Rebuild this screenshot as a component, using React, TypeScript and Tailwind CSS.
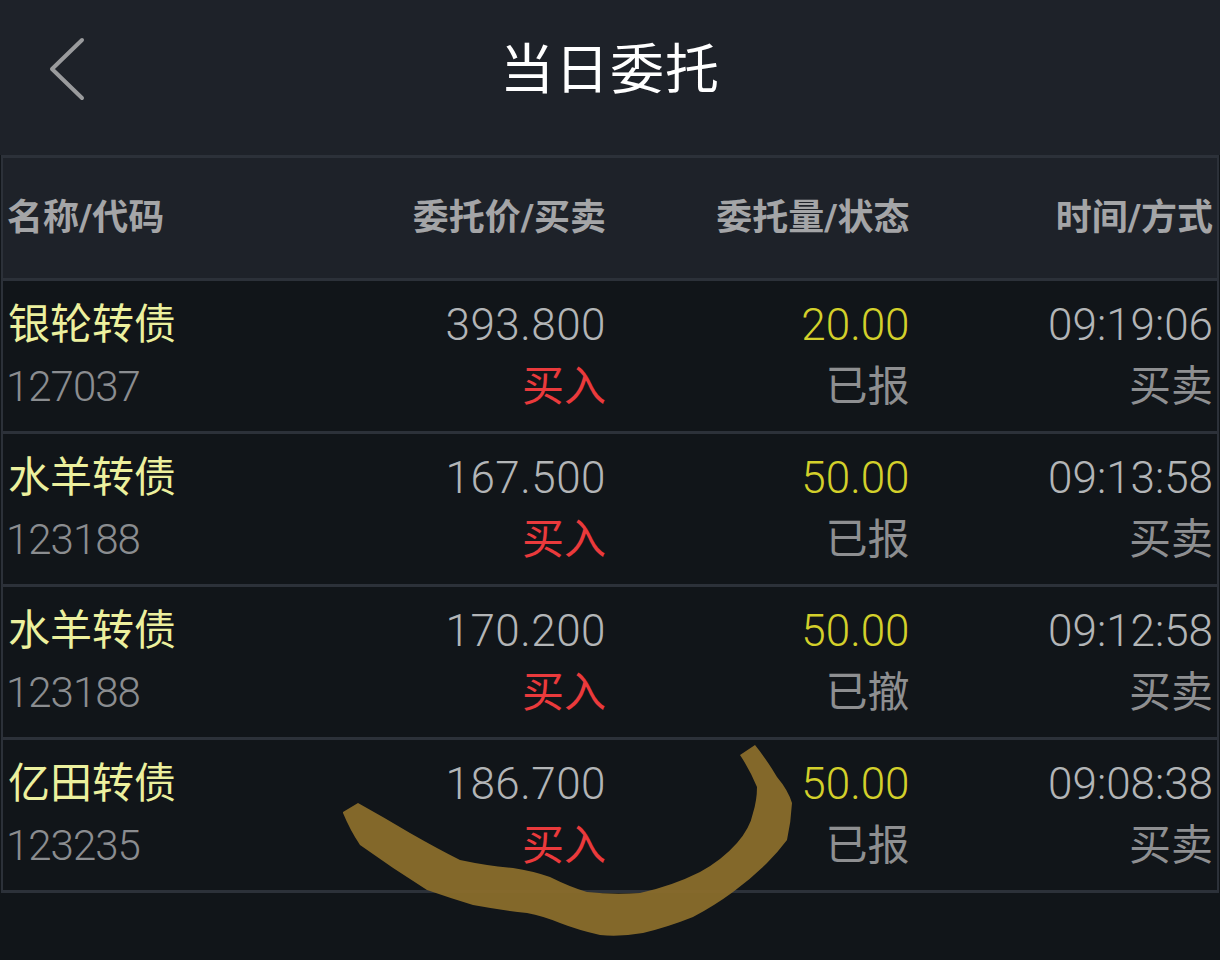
import React from "react";

type Order = {
  name: string;
  code: string;
  price: string;
  side: string;
  qty: string;
  status: string;
  time: string;
  mode: string;
};

const orders: Order[] = [
  { name: "银轮转债", code: "127037", price: "393.800", side: "买入", qty: "20.00", status: "已报", time: "09:19:06", mode: "买卖" },
  { name: "水羊转债", code: "123188", price: "167.500", side: "买入", qty: "50.00", status: "已报", time: "09:13:58", mode: "买卖" },
  { name: "水羊转债", code: "123188", price: "170.200", side: "买入", qty: "50.00", status: "已撤", time: "09:12:58", mode: "买卖" },
  { name: "亿田转债", code: "123235", price: "186.700", side: "买入", qty: "50.00", status: "已报", time: "09:08:38", mode: "买卖" },
];

const font = { fontFamily: "Roboto, 'Noto Sans CJK SC', sans-serif" };

export default function App() {
  return (
    <div className="relative h-[960px] w-[1220px] overflow-hidden bg-[#111519]" style={font}>
      {/* 顶部导航 */}
      <header className="relative flex h-[155px] items-center justify-center bg-[#1e2229]">
        <button className="absolute left-[44px] top-[36px] flex h-[66px] w-[44px] items-center justify-center">
          <svg width="40" height="66" viewBox="0 0 40 66" fill="none">
            <path d="M36 4 L6 33 L36 62" stroke="#9a9b9d" strokeWidth="4" strokeLinecap="round" strokeLinejoin="round" />
          </svg>
        </button>
        <h1 className="mb-[14px] text-[54px] font-normal leading-none tracking-[1px] text-white">当日委托</h1>
      </header>

      {/* 委托列表 */}
      <div className="mx-[1px] border-x-[2px] border-y-[3px] border-[#2c3139]">
        <div className="grid h-[120px] grid-cols-4 items-center bg-[#1e2229] text-[36px] font-bold text-[#a4a5a7]">
          <div className="pl-[4px]">名称/代码</div>
          <div className="pr-[4px] text-right">委托价/买卖</div>
          <div className="pr-[4px] text-right">委托量/状态</div>
          <div className="pr-[4px] text-right">时间/方式</div>
        </div>
        {orders.map((o, i) => (
          <div
            key={i}
            className="grid h-[153px] grid-cols-4 content-center border-t-[3px] border-[#2c3139] text-[42px] leading-[62px]"
          >
            <div className="flex flex-col items-start pl-[5px]">
              <span className="text-[#ecf09e]">{o.name}</span>
              <span className="-ml-[2px] text-[42px] font-light tracking-[-1px] text-[#8b8d90]">{o.code}</span>
            </div>
            <div className="flex flex-col items-end pr-[4px]">
              <span className="text-[44px] font-light tracking-[0.5px] text-[#b3b5b7]">{o.price}</span>
              <span className="text-[#ea3a3c]">{o.side}</span>
            </div>
            <div className="flex flex-col items-end pr-[4px]">
              <span className="text-[44px] font-light text-[#d3d02b]">{o.qty}</span>
              <span className="text-[#8e8f91]">{o.status}</span>
            </div>
            <div className="flex flex-col items-end pr-[4px]">
              <span className="text-[44px] font-light text-[#b3b5b7]">{o.time}</span>
              <span className="text-[#8e8f91]">{o.mode}</span>
            </div>
          </div>
        ))}
      </div>

      {/* 手绘标记 */}
      <svg className="pointer-events-none absolute left-0 top-0" width="1220" height="960" viewBox="0 0 1220 960">
        <path
          d="M343 812 L358 803 Q385 818 410 833 Q438 849 460 860 Q488 866 513 868 Q533 871 550 877 Q570 887 587 892 Q613 895 640 893 Q672 886 700 872 Q722 860 737 843 Q750 828 753 813 Q757 800 757 787 Q750 770 740 755 L755 745 Q767 760 777 777 Q788 790 792 803 Q791 822 787 840 Q778 852 767 863 Q752 878 733 892 Q714 906 693 917 Q668 927 643 933 Q620 937 600 935 Q578 930 560 923 Q543 916 527 913 Q500 910 473 905 Q450 898 427 890 Q392 868 360 845 Q350 830 343 813 Z"
          fill="#8a6d2b"
          fillOpacity="0.95"
        />
      </svg>
    </div>
  );
}
